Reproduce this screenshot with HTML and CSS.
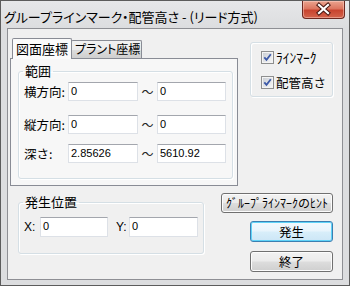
FILE: index.html
```html
<!DOCTYPE html>
<html lang="ja">
<head>
<meta charset="utf-8">
<link rel="stylesheet" href="styles.css">
</head>
<body>
<div class="window">
  <div class="titlebar">
    <span class="title">グループラインマーク・配管高さ - (リード方式)</span>
    <div class="close">
      <svg width="43" height="18" viewBox="0 0 43 18">
        <path d="M17 5 L26 13 M26 5 L17 13" stroke="#4a1a14" stroke-width="4.2" stroke-linecap="square"/>
        <path d="M17 5 L26 13 M26 5 L17 13" stroke="#ffffff" stroke-width="2.2" stroke-linecap="square"/>
      </svg>
    </div>
  </div>
  <div class="client">
    <div class="top">
      <div class="tabctl">
        <div class="tabs">
          <div class="tab active">図面座標</div>
          <div class="tab">プラント座標</div>
        </div>
        <div class="panel">
          <fieldset class="group range">
            <legend>範囲</legend>
            <div class="row row-first">
              <span class="lbl">横方向:</span>
              <div class="edit edit-a">0</div>
              <span class="tilde">～</span>
              <div class="edit edit-b">0</div>
            </div>
            <div class="row row-second">
              <span class="lbl">縦方向:</span>
              <div class="edit edit-a">0</div>
              <span class="tilde">～</span>
              <div class="edit edit-b">0</div>
            </div>
            <div class="row row-third">
              <span class="lbl">深さ:</span>
              <div class="edit edit-a">2.85626</div>
              <span class="tilde">～</span>
              <div class="edit edit-b">5610.92</div>
            </div>
          </fieldset>
        </div>
      </div>
      <div class="checks">
        <div class="check check-first">
          <svg class="cb" width="13" height="13" viewBox="0 0 13 13">
            <defs>
              <linearGradient id="cbg" x1="0" y1="0" x2="1" y2="1">
                <stop offset="0" stop-color="#cbcfd5"/>
                <stop offset="1" stop-color="#f6f6f6"/>
              </linearGradient>
            </defs>
            <rect x="0.5" y="0.5" width="12" height="12" fill="#f4f4f4" stroke="#8e8f8f"/>
            <rect x="2" y="2" width="9" height="9" fill="url(#cbg)"/>
            <path d="M3.3 6.3 L5.5 8.8 L9.8 3.2" fill="none" stroke="#3d5aa8" stroke-width="1.8"/>
          </svg>
          <span class="check-txt half">ﾗｲﾝﾏｰｸ</span>
        </div>
        <div class="check check-second">
          <svg class="cb" width="13" height="13" viewBox="0 0 13 13">
            <rect x="0.5" y="0.5" width="12" height="12" fill="#f4f4f4" stroke="#8e8f8f"/>
            <rect x="2" y="2" width="9" height="9" fill="url(#cbg)"/>
            <path d="M3.3 6.3 L5.5 8.8 L9.8 3.2" fill="none" stroke="#3d5aa8" stroke-width="1.8"/>
          </svg>
          <span class="check-txt">配管高さ</span>
        </div>
      </div>
    </div>
    <div class="bottom">
      <fieldset class="group pos">
        <legend>発生位置</legend>
        <div class="xy">
          <span class="xlbl">X:</span>
          <div class="edit edit-x">0</div>
          <span class="ylbl">Y:</span>
          <div class="edit edit-y">0</div>
        </div>
      </fieldset>
      <div class="buttons">
        <div class="btn btn-hint">ｸﾞﾙｰﾌﾟﾗｲﾝﾏｰｸのﾋﾝﾄ</div>
        <div class="btn btn-default">発生</div>
        <div class="btn btn-exit">終了</div>
      </div>
    </div>
  </div>
</div>
</body>
</html>
```

FILE: styles.css
```css
* { box-sizing: border-box; }
html, body { margin: 0; padding: 0; }
body {
  width: 350px;
  height: 286px;
  overflow: hidden;
  font-family: "Noto Sans CJK JP", "Noto Sans", sans-serif;
  font-size: 12px;
  color: #000;
  background: #fff;
}
.window {
  width: 350px;
  height: 286px;
  border: 1px solid #5c5c5c;
  background: #dcdddf;
  padding: 0 6px 4px 6px;
  display: flex;
  flex-direction: column;
}
.titlebar {
  height: 27px;
  display: flex;
  align-items: flex-start;
  background: linear-gradient(#e6e7e9, #dcdddf);
  margin: 0 -6px;
  padding: 0 4px 0 3px;
}
.title {
  font-size: 13px;
  line-height: 20px;
  margin-top: 6px;
  font-feature-settings: "palt";
  white-space: nowrap;
}
.close {
  margin-left: auto;
  width: 43px;
  height: 18px;
  border: 1px solid #6d2820;
  border-top: none;
  border-radius: 0 0 4px 4px;
  background: linear-gradient(#eaa48f 0%, #dc7660 45%, #c8442f 55%, #d4644c 100%);
  box-shadow: inset 0 0 0 1px rgba(255,220,210,0.45);
  overflow: hidden;
}
.close svg { display: block; margin: -1px 0 0 -1px; }
.client {
  height: 252px;
  border: 1px solid #8e8f94;
  background: #f0f0f0;
  display: flex;
  flex-direction: column;
}
.top { display: flex; align-items: flex-start; height: 158px; }
.tabctl { margin: 9px 0 0 2px; width: 228px; }
.tabs { display: flex; align-items: flex-end; padding-left: 2px; height: 20px; }
.tab {
  height: 18px;
  border: 1px solid #898c95;
  border-bottom: none;
  padding: 0 3px;
  line-height: 16px;
  font-size: 12.5px;
  white-space: nowrap;
  overflow: hidden;
  background: linear-gradient(#f2f2f2 0%, #ebebeb 50%, #dddddd 51%, #cfcfcf 100%);
  border-radius: 2px 2px 0 0;
}
.tab.active {
  height: 21px;
  width: 60px;
  margin-bottom: -1px;
  background: #fbfbfb;
  position: relative;
  z-index: 1;
  font-size: 13px;
  line-height: 19px;
  padding: 0 3px;
}
.tab:not(.active) {
  width: 71px;
  margin-left: -1px;
  padding: 0 0 0 3px;
  font-feature-settings: "palt";
  font-size: 12px;
}
.panel {
  height: 128px;
  border: 1px solid #898c95;
  background: #f7f7f7;
  padding: 5px 0 0 7px;
}
.group {
  margin: 0;
  padding: 0;
  border: 1px solid #d5dfe5;
  border-radius: 3px;
  box-shadow: inset 1px 1px 0 #fff, 1px 1px 0 #fff;
  min-width: 0;
}
.group legend {
  margin-left: 4px;
  padding: 0 2px;
  font-size: 13px;
  line-height: 14px;
}
.range { width: 215px; height: 115px; }
.row { display: flex; align-items: center; height: 19px; margin-left: 5px; }
.row-first { margin-top: 4px; }
.row-second { margin-top: 14px; }
.row-third { margin-top: 10px; }
.lbl { width: 44px; font-size: 12.5px; white-space: nowrap; }
.edit {
  height: 19px;
  background: #fff;
  border: 1px solid #dde1e7;
  border-top-color: #a3a6ad;
  font-family: "Liberation Sans", Arial, sans-serif;
  font-size: 11px;
  line-height: 17px;
  padding-left: 2px;
}
.edit-a { width: 70px; }
.edit-b { width: 69px; }
.tilde { width: 19px; text-align: center; font-size: 12px; color: #222; }
.checks {
  margin: 13px 0 0 12px;
  width: 83px;
  height: 55px;
  border: 1px solid #d5dfe5;
  border-radius: 3px;
  box-shadow: inset 1px 1px 0 #fff, 1px 1px 0 #fff;
  padding: 8px 0 0 10px;
}
.check { display: flex; align-items: center; height: 13px; }
.check-second { margin-top: 12px; }
.cb { display: block; flex: none; }
.check-txt { margin-left: 2px; font-size: 12.5px; line-height: 13px; white-space: nowrap; }
.check-txt.half { font-size: 13.5px; }
.bottom { display: flex; align-items: flex-start; }
.pos { margin: 8px 0 0 10px; width: 186px; height: 59px; }
.xy { display: flex; align-items: center; margin: 8px 0 0 5px; }
.xlbl, .ylbl { font-family: "Liberation Sans", Arial, sans-serif; font-size: 12px; }
.xlbl { width: 16px; }
.edit-x { width: 68px; height: 20px; }
.ylbl { width: 21px; padding-left: 8px; }
.edit-y { width: 69px; height: 20px; }
.buttons {
  margin: 6px 9px 0 auto;
  display: flex;
  flex-direction: column;
  align-items: flex-end;
}
.btn {
  height: 20px;
  width: 83px;
  border: 1px solid #707070;
  border-radius: 3px;
  background: linear-gradient(#f2f2f2 0%, #ebebeb 48%, #dddddd 52%, #cfcfcf 100%);
  box-shadow: inset 0 0 0 1px #fcfcfc;
  text-align: center;
  font-size: 12.5px;
  line-height: 18px;
  white-space: nowrap;
}
.btn-hint { width: 112px; font-size: 12px; }
.btn-default {
  margin-top: 8px;
  height: 21px;
  border-color: #3c7fb1;
  background: linear-gradient(#f3f9fd 0%, #e8f4fc 48%, #d8eefa 52%, #cce6f6 100%);
  box-shadow: inset 0 0 0 1px #5fd3f8;
  line-height: 19px;
}
.btn-exit { margin-top: 9px; height: 21px; line-height: 19px; }
```
